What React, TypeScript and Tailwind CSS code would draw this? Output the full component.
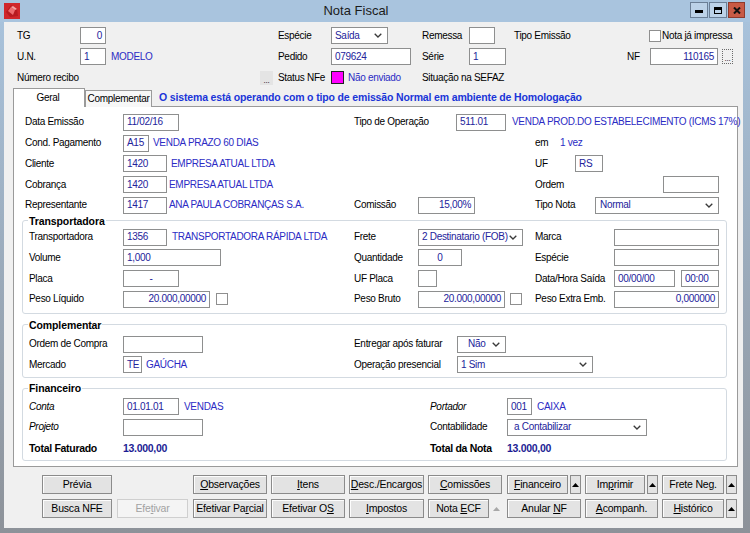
import React from 'react';

type Align = 'left' | 'right' | 'center';

function Input({ w, value = '', align = 'left' }: { w: string; value?: string; align?: Align }) {
  const a = align === 'right' ? 'justify-end' : align === 'center' ? 'justify-center' : 'justify-start';
  return (
    <div className={`${w} h-[17px] shrink-0 border border-[#8e8f8f] bg-white px-[3px] flex items-center ${a} text-[#23239b] whitespace-nowrap overflow-hidden`}>
      {value}
    </div>
  );
}

function Chevron() {
  return (
    <svg width="8" height="5" viewBox="0 0 8 5" className="shrink-0">
      <polyline points="0.7,0.7 4,4 7.3,0.7" fill="none" stroke="#3a3a3a" strokeWidth="1.3" />
    </svg>
  );
}

function Select({ w, value, pad = 'pl-[3px]' }: { w: string; value: string; pad?: string }) {
  return (
    <div className={`${w} h-[17px] shrink-0 border border-[#8e8f8f] bg-white flex items-center ${pad} pr-[5px] text-[#23239b]`}>
      <span className="flex-1 whitespace-nowrap overflow-hidden">{value}</span>
      <Chevron />
    </div>
  );
}

function Check() {
  return <div className="w-[12px] h-[12px] shrink-0 border border-[#8f8f8f] bg-white" />;
}

function Desc({ children, ml = 'ml-[4px]' }: { children: React.ReactNode; ml?: string }) {
  return <span className={`${ml} text-[#2b2bc4] whitespace-nowrap`}>{children}</span>;
}

function Row({ children }: { children: React.ReactNode }) {
  return <div className="flex items-center h-[20.75px] whitespace-nowrap">{children}</div>;
}

function Btn({ w, children, disabled = false }: { w: string; children: React.ReactNode; disabled?: boolean }) {
  return (
    <div
      className={`${w} h-[19px] shrink-0 flex items-center justify-center border text-[10.5px] tracking-[-0.2px] ${
        disabled
          ? 'border-[#cfcfcf] bg-[#f4f4f4] text-[#a2a2a2]'
          : 'border-[#8b8b8b] bg-[#e3e3e3] text-black shadow-[inset_1px_1px_0_#fdfdfd]'
      }`}
    >
      <span className="whitespace-pre">{children}</span>
    </div>
  );
}

function Arrow({ disabled = false }: { disabled?: boolean }) {
  return (
    <div
      className={`w-[11px] h-[19px] shrink-0 flex items-center justify-center ${
        disabled ? '' : 'border border-[#8b8b8b] bg-[#e3e3e3]'
      }`}
    >
      <svg width="7" height="4" viewBox="0 0 7 4">
        <polygon points="0,4 3.5,0 7,4" fill={disabled ? '#a8a8a8' : '#000'} />
      </svg>
    </div>
  );
}

function U({ children }: { children: React.ReactNode }) {
  return <span className="underline underline-offset-[1px]">{children}</span>;
}

function Group({ title, children, mt, pt, pb }: { title: string; children: React.ReactNode; mt: string; pt: string; pb: string }) {
  return (
    <fieldset className={`-ml-[3px] w-[705px] ${mt} border border-[#d3dae1] rounded-[3px] pl-[6px] ${pt} ${pb}`}>
      <legend className="-ml-[1px] px-[1px] font-bold text-[10.5px] leading-[12px] tracking-[-0.1px]">{title}</legend>
      {children}
    </fieldset>
  );
}

function TitleBar() {
  return (
    <div className="h-[22px] shrink-0 bg-[#a9c4de] flex items-start">
      <svg width="16" height="16" viewBox="0 0 16 16" className="ml-[4px] mt-[3px]">
        <rect width="16" height="16" fill="#d0262b" />
        <polygon points="2,9 7,2 13,6 14,13 6,14" fill="#b81a20" />
        <polygon points="4,8 7,4 11,7 9,12" fill="#ee6b6e" />
        <polygon points="7,4 11,7 13,6 9,3" fill="#f5a3a4" />
      </svg>
      <div className="flex-1 text-center text-[13px] leading-[22px] text-[#1b1b1b] pl-[2px] tracking-normal">Nota Fiscal</div>
      <div className="flex mt-[2px] mr-[5px]">
        <div className="w-[18px] h-[16px] border border-[#6b7f96] bg-[#bcd2e8] flex items-end justify-center pb-[4px]">
          <div className="w-[8px] h-[3px] bg-black" />
        </div>
        <div className="w-[18px] h-[16px] ml-[1px] border border-[#6b7f96] bg-[#bcd2e8] flex items-center justify-center">
          <div className="w-[8px] h-[7px] border border-black border-t-[3px]" />
        </div>
        <div className="w-[17px] h-[16px] ml-[1px] border border-[#8e3a2c] bg-[#c85a45] flex items-center justify-center">
          <svg width="8" height="7" viewBox="0 0 8 7">
            <path d="M1 0.5 L7 6.5 M7 0.5 L1 6.5" stroke="#111" strokeWidth="2" />
          </svg>
        </div>
      </div>
    </div>
  );
}

export default function App() {
  return (
    <div className="w-[750px] h-[533px] overflow-hidden bg-gradient-to-b from-[#a9c4de] to-[#8d9299] flex flex-col font-['Liberation_Sans',Arial,sans-serif] text-[10px] leading-none text-black tracking-[-0.3px]">
      <TitleBar />
      <div className="flex-1 ml-[4px] mr-[7px] mb-[5px] bg-[#f0f0f0] flex flex-col">
        {/* Cabeçalho */}
        <div className="pl-[13px] pt-[3px]">
          <div className="flex items-center h-[21px] whitespace-nowrap">
            <div className="w-[261px] shrink-0 flex items-center">
              <span className="w-[63px] shrink-0">TG</span>
              <Input w="w-[26px]" value="0" align="right" />
            </div>
            <div className="w-[144px] shrink-0 flex items-center">
              <span className="w-[53px] shrink-0">Espécie</span>
              <Select w="w-[57px]" value="Saída" />
            </div>
            <div className="w-[92px] shrink-0 flex items-center">
              <span className="w-[47px] shrink-0">Remessa</span>
              <Input w="w-[26px]" />
            </div>
            <div className="w-[135px] shrink-0">Tipo Emissão</div>
            <div className="flex items-center gap-[1px]">
              <Check />
              <span>Nota já impressa</span>
            </div>
          </div>
          <div className="flex items-center h-[21px] whitespace-nowrap">
            <div className="w-[261px] shrink-0 flex items-center">
              <span className="w-[63px] shrink-0">U.N.</span>
              <Input w="w-[26px]" value="1" />
              <Desc ml="ml-[5px]">MODELO</Desc>
            </div>
            <div className="w-[144px] shrink-0 flex items-center">
              <span className="w-[53px] shrink-0">Pedido</span>
              <Input w="w-[80px]" value="079624" />
            </div>
            <div className="w-[205px] shrink-0 flex items-center">
              <span className="w-[47px] shrink-0">Série</span>
              <Input w="w-[37px]" value="1" />
            </div>
            <div className="flex items-center">
              <span className="w-[23px] shrink-0">NF</span>
              <Input w="w-[68px]" value="110165" align="right" />
              <div className="ml-[4px] w-[11px] h-[15px] border border-dotted border-[#6a6a6a] flex items-end justify-center text-[8px] leading-[8px]">...</div>
            </div>
          </div>
          <div className="flex items-center h-[21px] whitespace-nowrap">
            <div className="w-[261px] shrink-0 flex items-center">
              <span className="flex-1">Número recibo</span>
              <div className="mr-[5px] w-[13px] h-[14px] bg-[#e4e4e4] flex items-end justify-center text-[8px] leading-[8px]">...</div>
            </div>
            <div className="w-[144px] shrink-0 flex items-center">
              <span className="w-[53px] shrink-0">Status NFe</span>
              <div className="w-[13px] h-[13px] border border-[#222] bg-[#ff00ff]" />
              <Desc>Não enviado</Desc>
            </div>
            <div>Situação na SEFAZ</div>
          </div>
        </div>

        {/* Abas */}
        <div className="ml-[9px] mr-[5px]">
          <div className="flex items-end h-[19px] relative z-10 -mb-[1px]">
            <div className="w-[72px] h-[19px] border border-b-0 border-[#9a9a9a] bg-white flex items-center justify-center pr-[2px]">Geral</div>
            <div className="w-[67px] h-[17px] border border-b-0 border-[#9a9a9a] bg-[#f7f7f7] flex items-center justify-center">Complementar</div>
            <div className="ml-[7px] self-center font-bold text-[10.5px] tracking-[-0.15px] text-[#1a35d8] whitespace-nowrap">
              O sistema está operando com o tipo de emissão Normal em ambiente de Homologação
            </div>
          </div>
          <div className="h-[361px] border border-[#9a9a9a] bg-white pl-[11px] pt-[5px]">
            <Row>
              <div className="w-[329px] shrink-0 flex items-center">
                <span className="w-[98px] shrink-0">Data Emissão</span>
                <Input w="w-[56px]" value="11/02/16" />
              </div>
              <span className="w-[102px] shrink-0">Tipo de Operação</span>
              <Input w="w-[50px]" value="511.01" />
              <Desc ml="ml-[6px]">VENDA PROD.DO ESTABELECIMENTO (ICMS 17%)</Desc>
            </Row>
            <Row>
              <div className="w-[510px] shrink-0 flex items-center">
                <span className="w-[98px] shrink-0">Cond. Pagamento</span>
                <Input w="w-[26px]" value="A15" />
                <Desc>VENDA PRAZO 60 DIAS</Desc>
              </div>
              <span className="w-[25px] shrink-0">em</span>
              <Desc ml="ml-0">1 vez</Desc>
            </Row>
            <Row>
              <div className="w-[510px] shrink-0 flex items-center">
                <span className="w-[98px] shrink-0">Cliente</span>
                <Input w="w-[44px]" value="1420" />
                <Desc>EMPRESA ATUAL LTDA</Desc>
              </div>
              <span className="w-[40px] shrink-0">UF</span>
              <Input w="w-[28px]" value="RS" />
            </Row>
            <Row>
              <div className="w-[510px] shrink-0 flex items-center">
                <span className="w-[98px] shrink-0">Cobrança</span>
                <Input w="w-[44px]" value="1420" />
                <Desc ml="ml-[2px]">EMPRESA ATUAL LTDA</Desc>
              </div>
              <span className="w-[128px] shrink-0">Ordem</span>
              <Input w="w-[56px]" />
            </Row>
            <Row>
              <div className="w-[329px] shrink-0 flex items-center">
                <span className="w-[98px] shrink-0">Representante</span>
                <Input w="w-[44px]" value="1417" />
                <Desc ml="ml-[2px]">ANA PAULA COBRANÇAS S.A.</Desc>
              </div>
              <div className="w-[181px] shrink-0 flex items-center">
                <span className="w-[64px] shrink-0">Comissão</span>
                <Input w="w-[57px]" value="15,00%" align="right" />
              </div>
              <span className="w-[60px] shrink-0">Tipo Nota</span>
              <Select w="w-[124px]" value="Normal" pad="pl-[4px]" />
            </Row>

            <Group title="Transportadora" mt="-mt-[1px]" pt="pt-0" pb="pb-[3px]">
              <Row>
                <div className="w-[325px] shrink-0 flex items-center">
                  <span className="w-[94px] shrink-0">Transportadora</span>
                  <Input w="w-[44px]" value="1356" />
                  <Desc ml="ml-[5px]">TRANSPORTADORA RÁPIDA LTDA</Desc>
                </div>
                <div className="w-[181px] shrink-0 flex items-center">
                  <span className="w-[64px] shrink-0">Frete</span>
                  <Select w="w-[105px]" value="2 Destinatario (FOB)" />
                </div>
                <span className="w-[79px] shrink-0">Marca</span>
                <Input w="w-[105px]" />
              </Row>
              <Row>
                <div className="w-[325px] shrink-0 flex items-center">
                  <span className="w-[94px] shrink-0">Volume</span>
                  <Input w="w-[98px]" value="1,000" />
                </div>
                <div className="w-[181px] shrink-0 flex items-center">
                  <span className="w-[64px] shrink-0">Quantidade</span>
                  <Input w="w-[44px]" value="0" align="center" />
                </div>
                <span className="w-[79px] shrink-0">Espécie</span>
                <Input w="w-[105px]" />
              </Row>
              <Row>
                <div className="w-[325px] shrink-0 flex items-center">
                  <span className="w-[94px] shrink-0">Placa</span>
                  <Input w="w-[56px]" value="-" align="center" />
                </div>
                <div className="w-[181px] shrink-0 flex items-center">
                  <span className="w-[64px] shrink-0">UF Placa</span>
                  <Input w="w-[19px]" />
                </div>
                <span className="w-[79px] shrink-0">Data/Hora Saída</span>
                <Input w="w-[61px]" value="00/00/00" />
                <div className="ml-[6px]">
                  <Input w="w-[38px]" value="00:00" />
                </div>
              </Row>
              <Row>
                <div className="w-[325px] shrink-0 flex items-center">
                  <span className="w-[94px] shrink-0">Peso Líquido</span>
                  <Input w="w-[87px]" value="20.000,00000" align="right" />
                  <div className="ml-[6px]"><Check /></div>
                </div>
                <div className="w-[181px] shrink-0 flex items-center">
                  <span className="w-[64px] shrink-0">Peso Bruto</span>
                  <Input w="w-[87px]" value="20.000,00000" align="right" />
                  <div className="ml-[5px]"><Check /></div>
                </div>
                <span className="w-[79px] shrink-0">Peso Extra Emb.</span>
                <Input w="w-[105px]" value="0,000000" align="right" />
              </Row>
            </Group>

            <Group title="Complementar" mt="mt-[5px]" pt="pt-[3px]" pb="pb-[2px]">
              <Row>
                <div className="w-[325px] shrink-0 flex items-center">
                  <span className="w-[94px] shrink-0">Ordem de Compra</span>
                  <Input w="w-[80px]" />
                </div>
                <span className="w-[103px] shrink-0">Entregar após faturar</span>
                <Select w="w-[49px]" value="Não" pad="pl-[10px]" />
              </Row>
              <Row>
                <div className="w-[325px] shrink-0 flex items-center">
                  <span className="w-[94px] shrink-0">Mercado</span>
                  <Input w="w-[19px]" value="TE" />
                  <Desc>GAÚCHA</Desc>
                </div>
                <span className="w-[103px] shrink-0">Operação presencial</span>
                <Select w="w-[136px]" value="1 Sim" />
              </Row>
            </Group>

            <Group title="Financeiro" mt="mt-[4px]" pt="pt-[2px]" pb="pb-[1px]">
              <Row>
                <div className="w-[401px] shrink-0 flex items-center">
                  <span className="w-[94px] shrink-0 italic">Conta</span>
                  <Input w="w-[56px]" value="01.01.01" />
                  <Desc ml="ml-[5px]">VENDAS</Desc>
                </div>
                <span className="w-[77px] shrink-0 italic">Portador</span>
                <Input w="w-[25px]" value="001" />
                <Desc ml="ml-[5px]">CAIXA</Desc>
              </Row>
              <Row>
                <div className="w-[401px] shrink-0 flex items-center">
                  <span className="w-[94px] shrink-0 italic">Projeto</span>
                  <Input w="w-[80px]" />
                </div>
                <span className="w-[77px] shrink-0">Contabilidade</span>
                <Select w="w-[140px]" value="a Contabilizar" pad="pl-[6px]" />
              </Row>
              <Row>
                <div className="w-[401px] shrink-0 flex items-center font-bold text-[10.5px]">
                  <span className="w-[94px] shrink-0">Total Faturado</span>
                  <span className="text-[#1c1c94]">13.000,00</span>
                </div>
                <span className="w-[77px] shrink-0 font-bold text-[10.5px]">Total da Nota</span>
                <span className="font-bold text-[10.5px] text-[#1c1c94]">13.000,00</span>
              </Row>
            </Group>
          </div>
        </div>

        {/* Botões */}
        <div className="mt-[8px] pl-[38px] flex flex-col gap-[5px]">
          <div className="flex items-center">
            <Btn w="w-[70px]">Prévia</Btn>
            <div className="ml-[81px]"><Btn w="w-[74px]"><U>O</U>bservações</Btn></div>
            <div className="ml-[4px]"><Btn w="w-[74px]"><U>I</U>tens</Btn></div>
            <div className="ml-[4px]"><Btn w="w-[75px]"><U>D</U>esc./Encargos</Btn></div>
            <div className="ml-[4px]"><Btn w="w-[74px]"><U>C</U>omissões</Btn></div>
            <div className="ml-[5px]"><Btn w="w-[61px]"><U>F</U>inanceiro</Btn></div>
            <div className="ml-[2px]"><Arrow /></div>
            <div className="ml-[4px]"><Btn w="w-[60px]">Im<U>p</U>rimir</Btn></div>
            <div className="ml-[2px]"><Arrow /></div>
            <div className="ml-[4px]"><Btn w="w-[62px]">Frete Neg.</Btn></div>
            <div className="ml-[2px]"><Arrow /></div>
          </div>
          <div className="flex items-center">
            <Btn w="w-[70px]">Busca NFE</Btn>
            <div className="ml-[5px]"><Btn w="w-[71px]" disabled>Efe<U>t</U>ivar</Btn></div>
            <div className="ml-[5px]"><Btn w="w-[74px]">Efetivar Pa<U>r</U>cial</Btn></div>
            <div className="ml-[4px]"><Btn w="w-[74px]">Efetivar O<U>S</U></Btn></div>
            <div className="ml-[4px]"><Btn w="w-[75px]"><U>I</U>mpostos</Btn></div>
            <div className="ml-[4px]"><Btn w="w-[61px]">Nota <U>E</U>CF</Btn></div>
            <div className="ml-[2px]"><Arrow disabled /></div>
            <div className="ml-[5px]"><Btn w="w-[74px]">Anular <U>N</U>F</Btn></div>
            <div className="ml-[4px]"><Btn w="w-[73px]"><U>A</U>companh.</Btn></div>
            <div className="ml-[4px]"><Btn w="w-[62px]"><U>H</U>istórico</Btn></div>
            <div className="ml-[2px]"><Arrow /></div>
          </div>
        </div>
      </div>
    </div>
  );
}
